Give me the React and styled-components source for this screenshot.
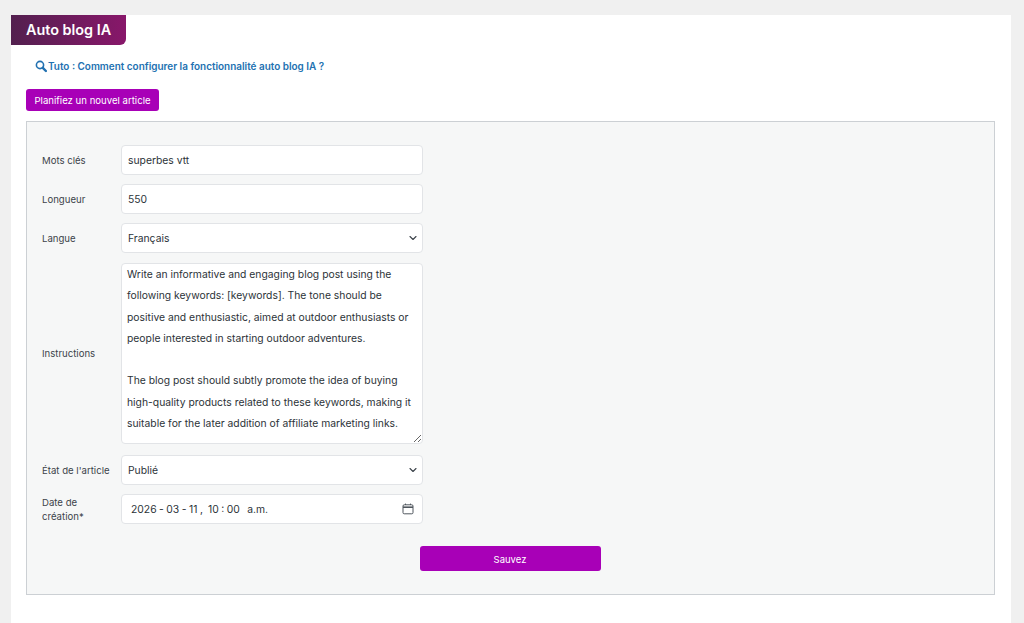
import React from "react"
import styled, { createGlobalStyle } from "styled-components"
import { ChevronDown } from "lucide-react"

const GlobalStyle = createGlobalStyle`
  html, body {
    margin: 0;
    background: #f0f0f0;
    font-family: Inter, "Liberation Sans", sans-serif;
    color: #2c3338;
  }
`

const Page = styled.div`
  height: 623px;
  padding: 15px 13px 0 11px;
  box-sizing: border-box;
  overflow: hidden;
`

const Panel = styled.div`
  background: #fff;
  height: 608px;
`

const TitleTab = styled.h1`
  display: inline-block;
  margin: 0;
  width: 115px;
  height: 30px;
  box-sizing: border-box;
  padding-left: 15px;
  background: linear-gradient(90deg, #53204f, #88176a);
  border-bottom-right-radius: 6px;
  color: #fff;
  font-family: Inter, sans-serif;
  font-size: 14.4px;
  font-weight: 600;
  line-height: 30px;
`

const TutoLink = styled.a`
  display: flex;
  align-items: center;
  gap: 1px;
  margin: 12px 0 0 24px;
  height: 18px;
  color: #2271b1;
  font-size: 9.95px;
  font-weight: 600;
  text-decoration: none;
`

const PlanButton = styled.button`
  display: block;
  margin: 14px 0 0 15px;
  width: 133px;
  height: 22px;
  padding: 0;
  border: none;
  border-radius: 3px;
  background: #a800b7;
  color: #fff;
  font-family: inherit;
  font-size: 9.6px;
`

const FormBox = styled.form`
  margin: 10px 16px 0 15px;
  height: 474px;
  box-sizing: border-box;
  padding: 23px 15px 0;
  border: 1px solid #ccd0d4;
  background: #f6f7f7;
`

const Fields = styled.div`
  display: flex;
  flex-direction: column;
  gap: 9px;
  width: 381px;
`

const Row = styled.div`
  display: grid;
  grid-template-columns: 79px 302px;
  align-items: center;
  margin-top: ${p => p.$top || 0}px;
`

const Label = styled.label`
  padding: 1px 9px 0 0;
  font-size: 9.6px;
  line-height: 14px;
  color: #3c434a;
`

const Control = styled.div`
  position: relative;
`

const baseField = `
  display: block;
  width: 100%;
  height: 30px;
  box-sizing: border-box;
  padding: 0 6px;
  border: 1px solid #e2e4e7;
  border-radius: 4px;
  background: #fff;
  color: #2c3338;
  font-family: Inter, sans-serif;
  font-size: 10.35px;
`

const TextInput = styled.input`
  ${baseField}
`

const Select = styled.select`
  ${baseField}
  appearance: none;
`

const Arrow = styled(ChevronDown)`
  position: absolute;
  top: 9px;
  right: 4px;
  color: #3c434a;
  pointer-events: none;
`

const TextArea = styled.textarea`
  ${baseField}
  height: 181px;
  padding: 0 5px;
  line-height: 21.3px;
  overflow: hidden;
`

const DateField = styled.div`
  ${baseField}
  display: flex;
  align-items: center;
  justify-content: space-between;
  padding: 0 8px 0 9px;
`

const DateText = styled.span`
  white-space: pre;
  word-spacing: -0.4px;
`

const SaveRow = styled.div`
  display: flex;
  justify-content: center;
  width: 966px;
  margin: 22px 0 0 -15px;
`

const SaveButton = styled.button`
  width: 181px;
  height: 25px;
  padding: 1px 0 0;
  border: none;
  border-radius: 3px;
  background: #a800b7;
  color: #fff;
  font-family: inherit;
  font-size: 9.5px;
`

const SearchIcon = () => (
  <svg width="12" height="13" viewBox="0 0 12 13" fill="none" stroke="currentColor">
    <circle cx="5" cy="5" r="3.6" strokeWidth="1.6" />
    <path d="M7.8 7.8 L10.9 11" strokeWidth="2.4" strokeLinecap="round" />
  </svg>
)

const CalendarIcon = () => (
  <svg width="12" height="12" viewBox="0 0 12 12" fill="none" stroke="#50575e">
    <rect x="1" y="1.8" width="10" height="9" rx="1.2" strokeWidth="1" />
    <path d="M1 4.2 H11" strokeWidth="1.6" />
    <path d="M3.5 0.6 V2 M8.5 0.6 V2" strokeWidth="1" />
  </svg>
)

const instructions = `Write an informative and engaging blog post using the following keywords: [keywords]. The tone should be positive and enthusiastic, aimed at outdoor enthusiasts or people interested in starting outdoor adventures.

The blog post should subtly promote the idea of buying high-quality products related to these keywords, making it suitable for the later addition of affiliate marketing links.`

export default function App() {
  return (
    <Page>
      <GlobalStyle />
      <Panel>
        <TitleTab>Auto blog IA</TitleTab>
        <TutoLink href="#">
          <SearchIcon />
          Tuto : Comment configurer la fonctionnalité auto blog IA ?
        </TutoLink>
        <PlanButton type="button">Planifiez un nouvel article</PlanButton>
        <FormBox>
          <Fields>
            <Row>
              <Label>Mots clés</Label>
              <Control><TextInput defaultValue="superbes vtt" /></Control>
            </Row>
            <Row>
              <Label>Longueur</Label>
              <Control><TextInput defaultValue="550" /></Control>
            </Row>
            <Row>
              <Label>Langue</Label>
              <Control>
                <Select defaultValue="fr"><option value="fr">Français</option></Select>
                <Arrow size={12} strokeWidth={2.2} />
              </Control>
            </Row>
            <Row $top={1}>
              <Label>Instructions</Label>
              <Control><TextArea defaultValue={instructions} /></Control>
            </Row>
            <Row $top={2}>
              <Label>État de l'article</Label>
              <Control>
                <Select defaultValue="pub"><option value="pub">Publié</option></Select>
                <Arrow size={12} strokeWidth={2.2} />
              </Control>
            </Row>
            <Row>
              <Label>Date de création*</Label>
              <Control>
                <DateField>
                  <DateText>2026 - 03 - 11 ,  10 : 00   a.m.</DateText>
                  <CalendarIcon />
                </DateField>
              </Control>
            </Row>
          </Fields>
          <SaveRow><SaveButton type="button">Sauvez</SaveButton></SaveRow>
        </FormBox>
      </Panel>
    </Page>
  )
}
